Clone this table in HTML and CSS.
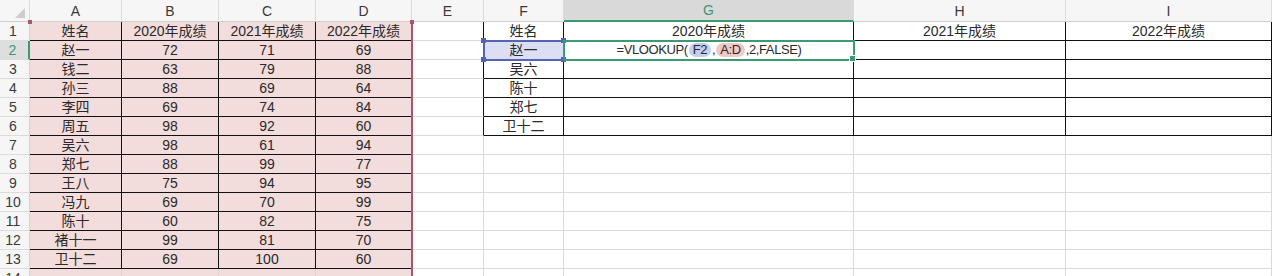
FILE: index.html
```html
<!DOCTYPE html>
<html lang="zh">
<head>
<meta charset="utf-8">
<title>Sheet</title>
<link rel="stylesheet" href="styles.css">
</head>
<body>
<div class="sheet">
  <div class="row head">
    <div class="c corner"></div>
    <div class="c">A</div><div class="c">B</div><div class="c">C</div><div class="c">D</div>
    <div class="c">E</div><div class="c">F</div><div class="c colsel">G</div><div class="c">H</div><div class="c">I</div>
  </div>

  <div class="row">
    <div class="c rh">1</div>
    <div class="c p t">姓名</div><div class="c p t">2020年成绩</div><div class="c p t">2021年成绩</div><div class="c p t">2022年成绩</div>
    <div class="c tr"></div><div class="c t">姓名</div><div class="c t">2020年成绩</div><div class="c t">2021年成绩</div><div class="c t">2022年成绩</div>
  </div>
  <div class="row">
    <div class="c rh rowsel">2</div>
    <div class="c p t">赵一</div><div class="c p t">72</div><div class="c p t">71</div><div class="c p t">69</div>
    <div class="c tr"></div>
    <div class="c t refcell">赵一<span class="hd h-tl"></span><span class="hd h-tr"></span><span class="hd h-bl"></span><span class="hd h-br"></span></div>
    <div class="c t active"><span class="formula">=VLOOKUP(<span class="pill pill-blue">F2</span>,<span class="pill pill-red">A:D</span>,2,FALSE)</span><span class="fill-handle"></span></div>
    <div class="c t"></div><div class="c t"></div>
  </div>
  <div class="row">
    <div class="c rh">3</div>
    <div class="c p t">钱二</div><div class="c p t">63</div><div class="c p t">79</div><div class="c p t">88</div>
    <div class="c tr"></div><div class="c t">吴六</div><div class="c t"></div><div class="c t"></div><div class="c t"></div>
  </div>
  <div class="row">
    <div class="c rh">4</div>
    <div class="c p t">孙三</div><div class="c p t">88</div><div class="c p t">69</div><div class="c p t">64</div>
    <div class="c tr"></div><div class="c t">陈十</div><div class="c t"></div><div class="c t"></div><div class="c t"></div>
  </div>
  <div class="row">
    <div class="c rh">5</div>
    <div class="c p t">李四</div><div class="c p t">69</div><div class="c p t">74</div><div class="c p t">84</div>
    <div class="c tr"></div><div class="c t">郑七</div><div class="c t"></div><div class="c t"></div><div class="c t"></div>
  </div>
  <div class="row">
    <div class="c rh">6</div>
    <div class="c p t">周五</div><div class="c p t">98</div><div class="c p t">92</div><div class="c p t">60</div>
    <div class="c tr"></div><div class="c t">卫十二</div><div class="c t"></div><div class="c t"></div><div class="c t"></div>
  </div>
  <div class="row">
    <div class="c rh">7</div>
    <div class="c p t">吴六</div><div class="c p t">98</div><div class="c p t">61</div><div class="c p t">94</div>
    <div class="c"></div><div class="c"></div><div class="c"></div><div class="c"></div><div class="c"></div>
  </div>
  <div class="row">
    <div class="c rh">8</div>
    <div class="c p t">郑七</div><div class="c p t">88</div><div class="c p t">99</div><div class="c p t">77</div>
    <div class="c"></div><div class="c"></div><div class="c"></div><div class="c"></div><div class="c"></div>
  </div>
  <div class="row">
    <div class="c rh">9</div>
    <div class="c p t">王八</div><div class="c p t">75</div><div class="c p t">94</div><div class="c p t">95</div>
    <div class="c"></div><div class="c"></div><div class="c"></div><div class="c"></div><div class="c"></div>
  </div>
  <div class="row">
    <div class="c rh">10</div>
    <div class="c p t">冯九</div><div class="c p t">69</div><div class="c p t">70</div><div class="c p t">99</div>
    <div class="c"></div><div class="c"></div><div class="c"></div><div class="c"></div><div class="c"></div>
  </div>
  <div class="row">
    <div class="c rh">11</div>
    <div class="c p t">陈十</div><div class="c p t">60</div><div class="c p t">82</div><div class="c p t">75</div>
    <div class="c"></div><div class="c"></div><div class="c"></div><div class="c"></div><div class="c"></div>
  </div>
  <div class="row">
    <div class="c rh">12</div>
    <div class="c p t">褚十一</div><div class="c p t">99</div><div class="c p t">81</div><div class="c p t">70</div>
    <div class="c"></div><div class="c"></div><div class="c"></div><div class="c"></div><div class="c"></div>
  </div>
  <div class="row">
    <div class="c rh">13</div>
    <div class="c p t">卫十二</div><div class="c p t">69</div><div class="c p t">100</div><div class="c p t">60</div>
    <div class="c"></div><div class="c"></div><div class="c"></div><div class="c"></div><div class="c"></div>
  </div>
  <div class="row">
    <div class="c rh">14</div>
    <div class="c p pl"></div><div class="c p pl"></div><div class="c p pl"></div><div class="c p pl"></div>
    <div class="c"></div><div class="c"></div><div class="c"></div><div class="c"></div><div class="c"></div>
  </div>

  <div class="range-ad"><span class="rh-tl"></span><span class="rh-tr"></span></div>
</div>
</body>
</html>
```

FILE: styles.css
```css
html, body {
  margin: 0;
  padding: 0;
  background: #ffffff;
  overflow: hidden;
}

.sheet {
  position: relative;
  width: 1272px;
  height: 276px;
  overflow: hidden;
  font-family: "Liberation Sans", "Noto Sans CJK SC", sans-serif;
  font-size: 14px;
  color: #2a2a2a;
}

.row {
  display: grid;
  grid-template-columns: 30px 92px 97px 97px 96px 72px 80px 290px 212px 1fr;
  height: 19px;
}

.c {
  position: relative;
  box-sizing: border-box;
  height: 100%;
  border-right: 1px solid #dadada;
  border-bottom: 1px solid #dadada;
  display: flex;
  align-items: center;
  justify-content: center;
  white-space: nowrap;
  line-height: 1;
}

.head {
  height: 22px;
}

.head .c {
  background: #f6f6f7;
  color: #3a3a3a;
  border-right-color: #dcdcdc;
  border-bottom-color: #cfcfcf;
}

.corner::after {
  content: "";
  position: absolute;
  right: 4px;
  bottom: 3px;
  width: 0;
  height: 0;
  border-left: 10px solid transparent;
  border-bottom: 10px solid #cdcdcf;
}

.head .colsel {
  background: #d9d9d9;
  color: #3c9a73;
  border-bottom: 2px solid #3c9a73;
}

.rh {
  background: #f6f6f7;
  color: #3a3a3a;
  border-right-color: #d4d4d4;
  border-bottom-color: #dcdcdc;
  padding-right: 3px;
}

.rh.rowsel {
  background: #dedede;
  color: #3c9a73;
  border-right: 2px solid #3c9a73;
}

.p {
  background: #f2dcdc;
}

.t {
  border-right-color: #111111;
  border-bottom-color: #111111;
}

.tr {
  border-right-color: #111111;
}

.pl {
  border-right-color: #e6cfcf;
  border-bottom-color: #e6cfcf;
}

/* F2 referenced cell */
.refcell {
  background: #dcdff4;
  outline: 2px solid #5563b5;
  outline-offset: -1px;
  z-index: 2;
}

.hd {
  position: absolute;
  width: 5px;
  height: 5px;
  background: #5563b5;
}
.h-tl { left: -3px; top: -3px; }
.h-tr { right: -3px; top: -3px; }
.h-bl { left: -3px; bottom: -3px; }
.h-br { right: -3px; bottom: -3px; }

/* active G2 cell */
.active {
  outline: 2px solid #3c9a73;
  outline-offset: -1px;
  z-index: 3;
}

.formula {
  font-size: 13px;
  letter-spacing: -0.4px;
  margin-left: 1px;
}

.fill-handle {
  position: absolute;
  right: -3px;
  bottom: -3px;
  width: 5px;
  height: 5px;
  background: #3c9a73;
  border: 1px solid #ffffff;
}

.pill {
  display: inline-block;
  padding: 0 4px;
  margin: 0 1px;
  border-radius: 7px;
  line-height: 14px;
}

.pill-blue {
  background: #c6cdf0;
}

.pill-red {
  background: #f2c8c6;
}

/* A:D range highlight border */
.range-ad {
  position: absolute;
  left: 29px;
  top: 22px;
  width: 384px;
  bottom: 0;
  box-sizing: border-box;
  border-right: 2px solid #a7596c;
  pointer-events: none;
  z-index: 4;
}

.rh-tl, .rh-tr {
  position: absolute;
  top: -2px;
  width: 4px;
  height: 4px;
  background: #a7596c;
}
.rh-tl { left: -1px; }
.rh-tr { right: -3px; }
```
